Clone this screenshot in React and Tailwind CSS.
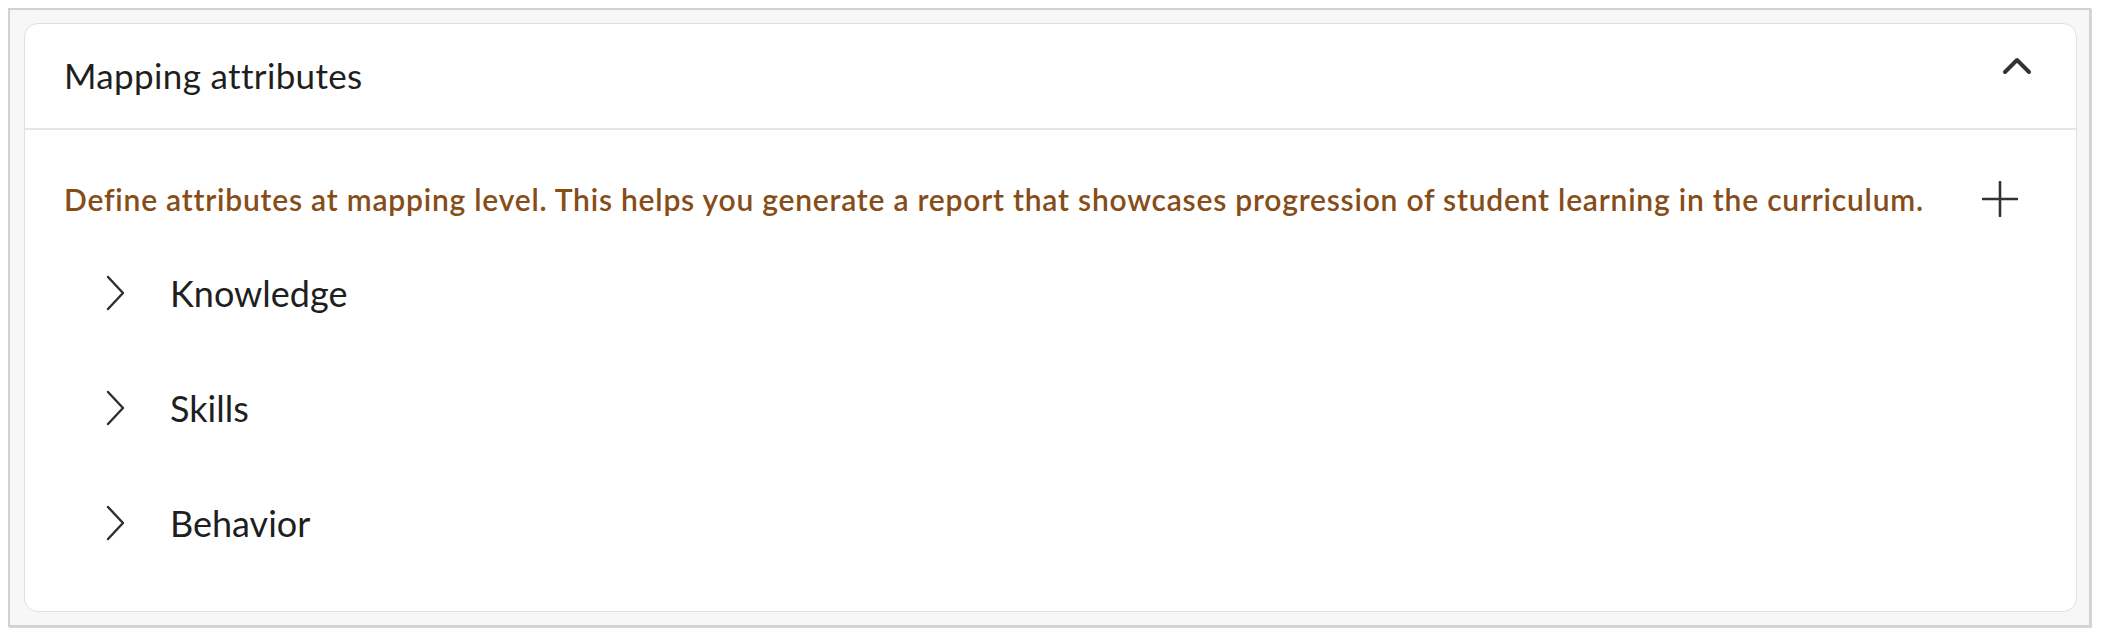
import React, { useState } from 'react';

const attributes = ['Knowledge', 'Skills', 'Behavior'];

function ChevronUp() {
  return (
    <svg width="30" height="20" viewBox="0 0 30 20" fill="none">
      <path d="M3 16 L15 4 L27 16" stroke="#333333" strokeWidth="4" strokeLinecap="round" strokeLinejoin="round" />
    </svg>
  );
}

function ChevronRight() {
  return (
    <svg width="20" height="36" viewBox="0 0 20 36" fill="none">
      <path d="M2 2 L17 18 L2 34" stroke="#2e2e2e" strokeWidth="2.4" strokeLinecap="round" strokeLinejoin="round" />
    </svg>
  );
}

function Plus() {
  return (
    <svg width="36" height="36" viewBox="0 0 36 36" fill="none">
      <path d="M18 1 V35 M1 18 H35" stroke="#333333" strokeWidth="2.6" strokeLinecap="round" />
    </svg>
  );
}

export default function App() {
  const [open, setOpen] = useState(true);

  return (
    <div className="w-[2102px] h-[640px] bg-white pl-[8px] pt-[8px] pr-[11px] pb-[13px] font-['Lato',sans-serif]">
      <div className="h-full border-2 border-[#d2d2d2] bg-[#f7f7f7] pl-[14px] pr-[12px] pt-[13px] pb-[13px] shadow-[1px_1px_0_#d6d6d6]">
        <div className="h-full rounded-[14px] border border-[#e0e0e0] bg-white flex flex-col">
          {/* header */}
          <div className="h-[106px] shrink-0 flex items-center justify-between pl-[39px] pr-[44px] border-b-2 border-[#e6e6e6]">
            <h2 className="text-[35px] text-[#1f1f1f] tracking-[0.35px] leading-none -mt-[1px]">Mapping attributes</h2>
            <button onClick={() => setOpen(!open)} className="self-start mt-[32px]">
              <ChevronUp />
            </button>
          </div>

          {open && (
            <div className="flex-1 flex flex-col pl-[39px] pr-[58px]">
              <div className="flex items-center justify-between pt-[51px]">
                <p className="text-[30px] font-semibold text-[#864d19] tracking-[0.78px] leading-none">
                  Define attributes at mapping level. This helps you generate a report that showcases progression of student learning in the curriculum.
                </p>
                <Plus />
              </div>

              <div className="flex flex-col mt-[58px] gap-[80px]">
                {attributes.map((name) => (
                  <div key={name} className="flex items-center h-[35px] pl-[42px]">
                    <ChevronRight />
                    <span className="ml-[44px] text-[36px] text-[#1f1f1f] leading-none">{name}</span>
                  </div>
                ))}
              </div>
            </div>
          )}
        </div>
      </div>
    </div>
  );
}
